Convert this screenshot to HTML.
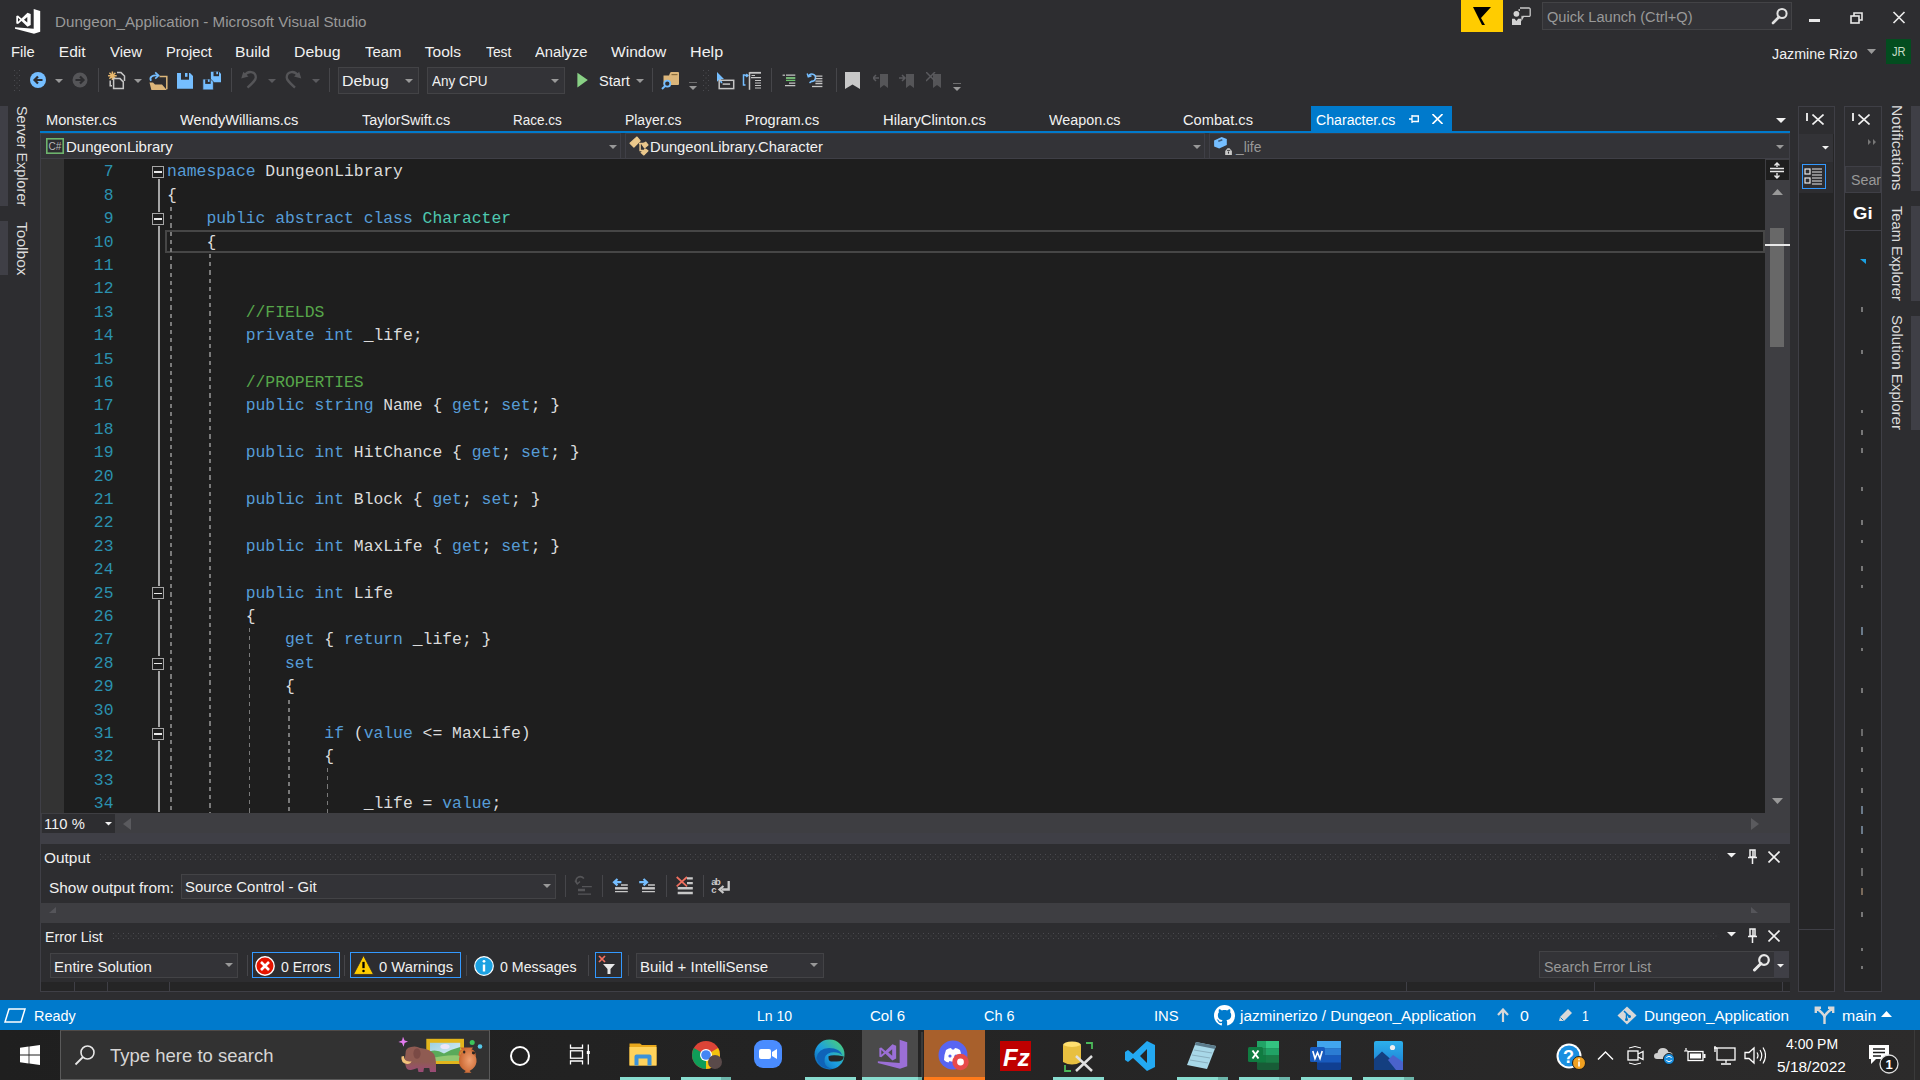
<!DOCTYPE html>
<html><head><meta charset="utf-8">
<style>
*{margin:0;padding:0;box-sizing:border-box}
html,body{width:1920px;height:1080px;overflow:hidden;background:#2d2d30;font-family:"Liberation Sans",sans-serif;color:#f1f1f1}
.a{position:absolute}
.t{position:absolute;white-space:nowrap;line-height:1}
.code{position:absolute;font-family:"Liberation Mono",monospace;white-space:pre;line-height:1}
</style></head><body>
<div class="a" style="left:0px;top:0px;width:1920px;height:1000px;background:#2d2d30;"></div>
<svg class="a" style="left:10px;top:4px" width="36" height="36" viewBox="0 0 36 36">
<path d="M5 23.3 L23.7 24.8 L23.7 5 L30.2 7 L30.2 27.7 L24 29.7 L5 24.8 Z" fill="#fff"/>
<path d="M6.3 12 L8 11.5 L11.5 14.5 L17.5 8.7 L20.7 10 L20.7 21 L17.5 22.7 L11.5 17 L8 20 L6.3 19.5 Z M8 13.8 L8 17.8 L10.2 15.8 Z M14 15.8 L17.3 13 L17.3 18.6 Z" fill="#fff" fill-rule="evenodd"/>
</svg>
<div class="a" style="left:1461px;top:0px;width:42px;height:32px;background:#ffcc00;"></div>
<svg class="a" style="left:1461px;top:0" width="42" height="32"><path d="M12 7 L30 7 L20 18 L24 25 L21 25 Z" fill="#000"/></svg>
<svg class="a" style="left:1510px;top:5px" width="22" height="22" viewBox="0 0 22 22">
<path d="M10 3 H19 a1.2 1.2 0 0 1 1.2 1.2 V10.2 a1.2 1.2 0 0 1 -1.2 1.2 H13.5 L12 14 V11.4 H11.5" fill="none" stroke="#c8c8c8" stroke-width="1.3"/>
<path d="M9.2 6 V4" stroke="#c8c8c8" stroke-width="1.3"/>
<circle cx="6.4" cy="8.8" r="2.9" fill="#d2d2d2"/>
<path d="M2 13.8 H4.6 L6.4 16 L8.2 13.8 H11 V20 H2 Z" fill="#d2d2d2"/></svg>
<div class="a" style="left:1542px;top:2px;width:250px;height:28px;background:#333337;border:1px solid #434346"></div>
<svg class="a" style="left:1770px;top:7px" width="20" height="18" viewBox="0 0 20 18">
<circle cx="12" cy="6.5" r="4.6" fill="none" stroke="#e0e0e0" stroke-width="2"/>
<path d="M9 10 L3 16" stroke="#e0e0e0" stroke-width="2.6" stroke-linecap="round"/></svg>
<div class="a" style="left:1809px;top:19px;width:11px;height:3px;background:#e8e8e8;"></div>
<svg class="a" style="left:1849px;top:11px" width="16" height="14" viewBox="0 0 16 14">
<rect x="2" y="5" width="8" height="7" fill="none" stroke="#e8e8e8" stroke-width="1.6"/>
<path d="M5 5 V2 H13 V9 H10" fill="none" stroke="#e8e8e8" stroke-width="1.6"/></svg>
<svg class="a" style="left:1892px;top:11px" width="14" height="13" viewBox="0 0 14 13">
<path d="M1.5 1 L12.5 12 M12.5 1 L1.5 12" stroke="#e8e8e8" stroke-width="1.7"/></svg>
<svg class="a" style="left:1867px;top:49px" width="9" height="5"><path d="M0 0 H9 L4.5 5 Z" fill="#999"/></svg>
<div class="a" style="left:1886px;top:39px;width:25px;height:25px;background:#034d1f;"></div>
<svg class="a" style="left:14px;top:70px" width="6" height="22"><defs><pattern id="dp1" width="5" height="5" patternUnits="userSpaceOnUse"><rect x="0" y="0" width="1" height="1" fill="#4a4a4f"/><rect x="2.5" y="2.5" width="1" height="1" fill="#4a4a4f"/></pattern></defs><rect width="6" height="22" fill="url(#dp1)"/></svg>
<svg class="a" style="left:29px;top:71px" width="18" height="18" viewBox="0 0 18 18"><circle cx="9" cy="9" r="8" fill="#75beff"/>
<path d="M13.5 9 H6 M9 5.5 L5.5 9 L9 12.5" stroke="#2d2d30" stroke-width="2.2" fill="none"/></svg>
<svg class="a" style="left:55px;top:79px" width="8" height="5"><path d="M0 0 H8 L4.0 4.0 Z" fill="#999999"/></svg>
<svg class="a" style="left:71px;top:71px" width="18" height="18" viewBox="0 0 18 18"><circle cx="9" cy="9" r="7.5" fill="#555558"/>
<path d="M4.5 9 H12 M9 5.5 L12.5 9 L9 12.5" stroke="#2d2d30" stroke-width="2.2" fill="none"/></svg>
<div class="a" style="left:98px;top:68px;width:1px;height:24px;background:#46464a;"></div>
<svg class="a" style="left:100px;top:64px" width="140" height="32" viewBox="0 0 140 32">
<path d="M12.4 7.4 V16 M8.1 11.7 H16.7 M9.4 8.7 L15.4 14.7 M15.4 8.7 L9.4 14.7" stroke="#e8b86d" stroke-width="1.5"/>
<path d="M17 8.6 H21 L24.5 12 V17" stroke="#c5c5c5" stroke-width="1.5" fill="none"/>
<path d="M10.2 16.5 V21.8 H12" stroke="#c5c5c5" stroke-width="1.5" fill="none"/>
<path d="M13.6 14.6 H20 L23.3 17.9 V24.6 H13.6 Z" fill="#2d2d30" stroke="#c5c5c5" stroke-width="1.5"/>
<path d="M59.5 12.6 H66.8 V25.2" stroke="#dcb67a" stroke-width="1.5" fill="none"/>
<path d="M49.5 18.6 H53 L55 20.6 H62 L66.8 25.9 H51.4 Z" fill="#dcb67a"/>
<path d="M51 16.8 C 49 13, 52.5 10.8, 58 11.6" stroke="#75beff" stroke-width="1.8" fill="none"/>
<path d="M55.2 8.4 L58.6 11.6 L55.2 14.6" stroke="#75beff" stroke-width="1.6" fill="none"/>
<path d="M77 9 H90 L93 12 V24.8 H77 Z" fill="#75beff"/><rect x="81" y="9" width="8" height="6.7" fill="#2d2d30"/><rect x="85" y="9" width="2.5" height="3.8" fill="#75beff"/>
<path d="M110.9 7.7 H119 L121 9.7 V18.2 H110.9 Z" fill="#75beff"/><rect x="113.5" y="7.7" width="5.5" height="4.5" fill="#2d2d30"/><rect x="116.3" y="7.7" width="1.7" height="2.5" fill="#75beff"/>
<path d="M102.8 15 H110.5 L113.4 17.9 V25.9 H102.8 Z" fill="#75beff" stroke="#2d2d30" stroke-width="0.8"/><rect x="105.2" y="15.4" width="5.5" height="4.5" fill="#2d2d30"/><rect x="107.9" y="15.4" width="1.7" height="2.5" fill="#75beff"/>
</svg>
<svg class="a" style="left:134px;top:79px" width="8" height="5"><path d="M0 0 H8 L4.0 4.0 Z" fill="#999999"/></svg>
<div class="a" style="left:231px;top:68px;width:1px;height:24px;background:#46464a;"></div>
<svg class="a" style="left:236px;top:64px" width="70" height="32" viewBox="0 0 70 32">
<path d="M5.2 14.6 L7.3 7.8 L12.5 12.5 Z" fill="#555558"/><path d="M8.8 11.2 C 11.5 6.6, 19.7 6.6, 19.8 13.5 C 19.8 16, 17.5 18.2, 11.5 23.6" stroke="#555558" stroke-width="2.3" fill="none"/>
<path d="M65.3 14.6 L63.2 7.8 L58 12.5 Z" fill="#555558"/><path d="M61.7 11.2 C 59 6.6, 50.8 6.6, 50.7 13.5 C 50.7 16, 53 18.2, 59 23.6" stroke="#555558" stroke-width="2.3" fill="none"/>
</svg>
<svg class="a" style="left:268px;top:79px" width="8" height="5"><path d="M0 0 H8 L4.0 4.0 Z" fill="#5a5a5e"/></svg>
<svg class="a" style="left:312px;top:79px" width="8" height="5"><path d="M0 0 H8 L4.0 4.0 Z" fill="#5a5a5e"/></svg>
<div class="a" style="left:329px;top:68px;width:1px;height:24px;background:#46464a;"></div>
<div class="a" style="left:338px;top:67px;width:81px;height:27px;background:#333337;border:1px solid #434346"></div>
<svg class="a" style="left:405px;top:79px" width="8" height="5"><path d="M0 0 H8 L4.0 4.0 Z" fill="#999999"/></svg>
<div class="a" style="left:427px;top:67px;width:138px;height:27px;background:#333337;border:1px solid #434346"></div>
<svg class="a" style="left:551px;top:79px" width="8" height="5"><path d="M0 0 H8 L4.0 4.0 Z" fill="#999999"/></svg>
<svg class="a" style="left:577px;top:72px" width="12" height="16"><path d="M0.4 0.8 L10.8 8 L0.4 15.4 Z" fill="#89d185"/></svg>
<svg class="a" style="left:636px;top:79px" width="8" height="5"><path d="M0 0 H8 L4.0 4.0 Z" fill="#999999"/></svg>
<div class="a" style="left:652px;top:68px;width:1px;height:24px;background:#46464a;"></div>
<svg class="a" style="left:650px;top:64px" width="180" height="32" viewBox="0 0 180 32">
<path d="M13.5 11.5 V20 Q13.5 21 14.5 21 H28 Q29 21 29 20 V9 Q29 8 28 8 H21.5 Q20.5 8 20 9 L19 11.5 Z" fill="#dcb67a"/><path d="M21.5 10.6 H27.5" stroke="#8a6d3e" stroke-width="1.2"/>
<circle cx="17.3" cy="19.7" r="3" fill="#2d2d30" stroke="#75beff" stroke-width="1.7"/><path d="M15.2 21.9 L12 25" stroke="#75beff" stroke-width="2"/>
<path d="M67 8 V17.8 L69.3 15.8 L71 19.5 L72.5 18.8 L70.8 15.3 L74 15 Z" fill="#75beff"/>
<rect x="69.2" y="16.3" width="14.5" height="8.3" fill="none" stroke="#c5c5c5" stroke-width="1.5"/><path d="M72.6 20.1 H80.1" stroke="#c5c5c5" stroke-width="1.5"/>
<path d="M95.5 11 H93.5 V21 H95.5" stroke="#75beff" stroke-width="1.5" fill="none"/><path d="M94.7 11.5 H97.5 M96.3 10 L98 11.5 L96.3 13" stroke="#75beff" stroke-width="1.3" fill="none"/>
<path d="M99.5 8.2 V25.8" stroke="#c5c5c5" stroke-width="1.5"/><path d="M99.5 8.8 H111" stroke="#c5c5c5" stroke-width="1.8"/>
<path d="M101.5 11.5 H105 M101 13.6 H111 M105 16.5 H111 M105 19 H111 M105 21.5 H111 M105 24 H111" stroke="#c5c5c5" stroke-width="1.2"/>
<path d="M132.6 11.2 H135" stroke="#c5c5c5" stroke-width="1.2"/><path d="M136 11.2 H145.3 M139 19.2 H145.3 M135 21.6 H145.3" stroke="#c5c5c5" stroke-width="1.3"/>
<path d="M136 14 H145.3" stroke="#8ae28a" stroke-width="1.5"/><path d="M136 16.4 H145.3" stroke="#6cc36c" stroke-width="1.3"/>
<path d="M158.5 12.5 a3.6 3.6 0 1 1 3 4.8 L159.5 18.8" stroke="#75beff" stroke-width="1.6" fill="none"/><path d="M157.2 9.5 L158.3 12.8 L161.5 11.8" stroke="#75beff" stroke-width="1.5" fill="none"/>
<path d="M165.4 12.2 H172.4 M165.4 14.7 H172.4 M165.4 17.2 H172.4 M165.4 19.5 H172.4" stroke="#c5c5c5" stroke-width="1.3"/><path d="M162 22.5 H172.4" stroke="#c5c5c5" stroke-width="1.3"/>
</svg>
<svg class="a" style="left:689px;top:82px" width="9" height="9"><path d="M0 0 H8" stroke="#999" stroke-width="1.2"/><path d="M0 4 H8 L4 8 Z" fill="#999"/></svg>
<svg class="a" style="left:703px;top:70px" width="6" height="22"><defs><pattern id="dp2" width="5" height="5" patternUnits="userSpaceOnUse"><rect x="0" y="0" width="1" height="1" fill="#4a4a4f"/><rect x="2.5" y="2.5" width="1" height="1" fill="#4a4a4f"/></pattern></defs><rect width="6" height="22" fill="url(#dp2)"/></svg>
<div class="a" style="left:771px;top:68px;width:1px;height:24px;background:#46464a;"></div>
<div class="a" style="left:835.7px;top:68px;width:1px;height:24px;background:#46464a;"></div>
<svg class="a" style="left:845px;top:72px" width="15" height="17"><path d="M0 0 H15 V17 L7.5 12.5 L0 17 Z" fill="#c8c8c8"/></svg>
<svg class="a" style="left:873px;top:72px" width="16" height="16" viewBox="0 0 16 16"><path d="M7 2 H15 V16 L11 13 L7 16 Z" fill="#555558"/><path d="M6 6 H0 M3 3 L0 6 L3 9" stroke="#5a5a5e" stroke-width="1.5" fill="none"/></svg>
<svg class="a" style="left:899px;top:72px" width="16" height="16" viewBox="0 0 16 16"><path d="M7 2 H15 V16 L11 13 L7 16 Z" fill="#555558"/><path d="M0 6 H6 M3 3 L6 6 L3 9" stroke="#5a5a5e" stroke-width="1.5" fill="none"/></svg>
<svg class="a" style="left:926px;top:72px" width="16" height="16" viewBox="0 0 16 16"><path d="M7 2 H15 V16 L11 13 L7 16 Z" fill="#555558"/><path d="M0 0 L9 9 M9 0 L0 9" stroke="#5a5a5e" stroke-width="1.5"/></svg>
<svg class="a" style="left:953px;top:83px" width="9" height="9"><path d="M0 0 H8" stroke="#999" stroke-width="1.2"/><path d="M0 4 H8 L4 8 Z" fill="#999"/></svg>
<div class="a" style="left:0px;top:106px;width:8px;height:100px;background:#3f3f46;"></div>
<div class="a" style="left:0px;top:221px;width:8px;height:54px;background:#3f3f46;"></div>
<div class="a" style="left:1311px;top:106px;width:141px;height:27px;background:#007acc;"></div>
<div class="a" style="left:40px;top:131px;width:1750px;height:2px;background:#007acc;"></div>
<svg class="a" style="left:1409px;top:114px" width="11" height="10" viewBox="0 0 11 10"><path d="M0 5 H3 M3 1 V9 M3 2 H10 M3 7.5 H10 M9.3 2 V7.5" stroke="#fff" stroke-width="1.3" fill="none"/></svg>
<svg class="a" style="left:1432px;top:114px" width="11" height="10" viewBox="0 0 11 10"><path d="M0.5 0 L10.5 10 M10.5 0 L0.5 10" stroke="#fff" stroke-width="1.6"/></svg>
<svg class="a" style="left:1776px;top:118px" width="10" height="6"><path d="M0 0 H10 L5.0 5.0 Z" fill="#f1f1f1"/></svg>
<div class="a" style="left:40px;top:133px;width:1750px;height:26px;background:#333337;border-bottom:1px solid #3f3f46"></div>
<div class="a" style="left:40px;top:133px;width:581px;height:26px;background:#333337;border:1px solid #3f3f46"></div>
<div class="a" style="left:625px;top:133px;width:580px;height:26px;background:#333337;border:1px solid #3f3f46"></div>
<div class="a" style="left:1209px;top:133px;width:581px;height:26px;background:#333337;border:1px solid #3f3f46"></div>
<svg class="a" style="left:46px;top:138px" width="18" height="16" viewBox="0 0 18 16"><rect x="0.8" y="0.8" width="16.4" height="14.4" fill="#2d2d30" stroke="#6db36d" stroke-width="1.6"/>
<text x="2.5" y="12" font-family="Liberation Sans" font-size="10" fill="#b8b8b8">C#</text></svg>
<svg class="a" style="left:609px;top:145px" width="8" height="5"><path d="M0 0 H8 L4.0 4.0 Z" fill="#999999"/></svg>
<svg class="a" style="left:625px;top:134px" width="30" height="24" viewBox="0 0 30 24">
<path d="M12 3.1 L15.1 6.9 L8.9 13.1 L5.1 9.3 Z M20.7 8.2 L22.9 10.9 L19.6 13.8 L17.1 10.4 Z M20.4 15.1 L22.9 16.9 L18.9 20.9 L16.2 18.4 Z" fill="#ebc88c" stroke="#ebc88c" stroke-width="1.3" stroke-linejoin="round"/>
<path d="M14 9.6 H19 M15.1 9.6 V16.6 H18" stroke="#ebc88c" stroke-width="1.5" fill="none"/></svg>
<svg class="a" style="left:1193px;top:145px" width="8" height="5"><path d="M0 0 H8 L4.0 4.0 Z" fill="#999999"/></svg>
<svg class="a" style="left:1209px;top:134px" width="30" height="24" viewBox="0 0 30 24">
<path d="M12.7 3.1 L17.8 5.1 L17.8 11.1 L10.2 14.4 L5.1 12.4 L5.1 6.4 Z" fill="#75beff"/><path d="M9.3 7.2 L13.3 5.7" stroke="#3a5a7a" stroke-width="1.5"/>
<path d="M16.2 17 L18.5 14.2 H20.5 L22.9 17 V20.9 H16.2 Z" fill="#c8c8c8"/><path d="M18 16.4 H21.2" stroke="#333337" stroke-width="0.9"/><path d="M19.5 17.6 V19.6" stroke="#333337" stroke-width="1.1"/></svg>
<svg class="a" style="left:1776px;top:145px" width="8" height="5"><path d="M0 0 H8 L4.0 4.0 Z" fill="#999999"/></svg>
<div class="a" style="left:40px;top:159px;width:1725px;height:654px;background:#1e1e1e;"></div>
<div class="a" style="left:40px;top:159px;width:24px;height:654px;background:#333333;"></div>
<div class="a" style="left:165px;top:230px;width:1600px;height:23px;background:transparent;border:2.5px solid #464646"></div>
<div class="code" style="left:103.66px;top:164.35px;font-size:16.39px;color:#2b91af">7</div>
<div class="code" style="left:167.10px;top:164.35px;font-size:16.39px"><span style="color:#569cd6">namespace</span><span style="color:#dcdcdc"> DungeonLibrary</span></div>
<div class="code" style="left:103.66px;top:187.75px;font-size:16.39px;color:#2b91af">8</div>
<div class="code" style="left:167.10px;top:187.75px;font-size:16.39px"><span style="color:#dcdcdc">{</span></div>
<div class="code" style="left:103.66px;top:211.15px;font-size:16.39px;color:#2b91af">9</div>
<div class="code" style="left:167.10px;top:211.15px;font-size:16.39px"><span style="color:#569cd6">    public abstract class</span><span style="color:#dcdcdc"> </span><span style="color:#4ec9b0">Character</span></div>
<div class="code" style="left:93.83px;top:234.55px;font-size:16.39px;color:#2b91af">10</div>
<div class="code" style="left:167.10px;top:234.55px;font-size:16.39px"><span style="color:#dcdcdc">    {</span></div>
<div class="code" style="left:93.83px;top:257.95px;font-size:16.39px;color:#2b91af">11</div>
<div class="code" style="left:93.83px;top:281.35px;font-size:16.39px;color:#2b91af">12</div>
<div class="code" style="left:93.83px;top:304.75px;font-size:16.39px;color:#2b91af">13</div>
<div class="code" style="left:167.10px;top:304.75px;font-size:16.39px"><span style="color:#57a64a">        //FIELDS</span></div>
<div class="code" style="left:93.83px;top:328.15px;font-size:16.39px;color:#2b91af">14</div>
<div class="code" style="left:167.10px;top:328.15px;font-size:16.39px"><span style="color:#569cd6">        private int</span><span style="color:#dcdcdc"> _life;</span></div>
<div class="code" style="left:93.83px;top:351.55px;font-size:16.39px;color:#2b91af">15</div>
<div class="code" style="left:93.83px;top:374.95px;font-size:16.39px;color:#2b91af">16</div>
<div class="code" style="left:167.10px;top:374.95px;font-size:16.39px"><span style="color:#57a64a">        //PROPERTIES</span></div>
<div class="code" style="left:93.83px;top:398.35px;font-size:16.39px;color:#2b91af">17</div>
<div class="code" style="left:167.10px;top:398.35px;font-size:16.39px"><span style="color:#569cd6">        public string</span><span style="color:#dcdcdc"> Name { </span><span style="color:#569cd6">get</span><span style="color:#dcdcdc">; </span><span style="color:#569cd6">set</span><span style="color:#dcdcdc">; }</span></div>
<div class="code" style="left:93.83px;top:421.75px;font-size:16.39px;color:#2b91af">18</div>
<div class="code" style="left:93.83px;top:445.15px;font-size:16.39px;color:#2b91af">19</div>
<div class="code" style="left:167.10px;top:445.15px;font-size:16.39px"><span style="color:#569cd6">        public int</span><span style="color:#dcdcdc"> HitChance { </span><span style="color:#569cd6">get</span><span style="color:#dcdcdc">; </span><span style="color:#569cd6">set</span><span style="color:#dcdcdc">; }</span></div>
<div class="code" style="left:93.83px;top:468.55px;font-size:16.39px;color:#2b91af">20</div>
<div class="code" style="left:93.83px;top:491.95px;font-size:16.39px;color:#2b91af">21</div>
<div class="code" style="left:167.10px;top:491.95px;font-size:16.39px"><span style="color:#569cd6">        public int</span><span style="color:#dcdcdc"> Block { </span><span style="color:#569cd6">get</span><span style="color:#dcdcdc">; </span><span style="color:#569cd6">set</span><span style="color:#dcdcdc">; }</span></div>
<div class="code" style="left:93.83px;top:515.35px;font-size:16.39px;color:#2b91af">22</div>
<div class="code" style="left:93.83px;top:538.75px;font-size:16.39px;color:#2b91af">23</div>
<div class="code" style="left:167.10px;top:538.75px;font-size:16.39px"><span style="color:#569cd6">        public int</span><span style="color:#dcdcdc"> MaxLife { </span><span style="color:#569cd6">get</span><span style="color:#dcdcdc">; </span><span style="color:#569cd6">set</span><span style="color:#dcdcdc">; }</span></div>
<div class="code" style="left:93.83px;top:562.15px;font-size:16.39px;color:#2b91af">24</div>
<div class="code" style="left:93.83px;top:585.55px;font-size:16.39px;color:#2b91af">25</div>
<div class="code" style="left:167.10px;top:585.55px;font-size:16.39px"><span style="color:#569cd6">        public int</span><span style="color:#dcdcdc"> Life</span></div>
<div class="code" style="left:93.83px;top:608.95px;font-size:16.39px;color:#2b91af">26</div>
<div class="code" style="left:167.10px;top:608.95px;font-size:16.39px"><span style="color:#dcdcdc">        {</span></div>
<div class="code" style="left:93.83px;top:632.35px;font-size:16.39px;color:#2b91af">27</div>
<div class="code" style="left:167.10px;top:632.35px;font-size:16.39px"><span style="color:#569cd6">            get</span><span style="color:#dcdcdc"> { </span><span style="color:#569cd6">return</span><span style="color:#dcdcdc"> _life; }</span></div>
<div class="code" style="left:93.83px;top:655.75px;font-size:16.39px;color:#2b91af">28</div>
<div class="code" style="left:167.10px;top:655.75px;font-size:16.39px"><span style="color:#569cd6">            set</span></div>
<div class="code" style="left:93.83px;top:679.15px;font-size:16.39px;color:#2b91af">29</div>
<div class="code" style="left:167.10px;top:679.15px;font-size:16.39px"><span style="color:#dcdcdc">            {</span></div>
<div class="code" style="left:93.83px;top:702.55px;font-size:16.39px;color:#2b91af">30</div>
<div class="code" style="left:93.83px;top:725.95px;font-size:16.39px;color:#2b91af">31</div>
<div class="code" style="left:167.10px;top:725.95px;font-size:16.39px"><span style="color:#569cd6">                if</span><span style="color:#dcdcdc"> (</span><span style="color:#569cd6">value</span><span style="color:#dcdcdc"> &lt;= MaxLife)</span></div>
<div class="code" style="left:93.83px;top:749.35px;font-size:16.39px;color:#2b91af">32</div>
<div class="code" style="left:167.10px;top:749.35px;font-size:16.39px"><span style="color:#dcdcdc">                {</span></div>
<div class="code" style="left:93.83px;top:772.75px;font-size:16.39px;color:#2b91af">33</div>
<div class="code" style="left:93.83px;top:796.15px;font-size:16.39px;color:#2b91af">34</div>
<div class="code" style="left:167.10px;top:796.15px;font-size:16.39px"><span style="color:#dcdcdc">                    _life = </span><span style="color:#569cd6">value</span><span style="color:#dcdcdc">;</span></div>
<div class="a" style="left:152px;top:166.1px;width:12.2px;height:12.2px;border:1.4px solid #a5a5a5;background:#1e1e1e"></div>
<div class="a" style="left:154.2px;top:171.4px;width:7.8px;height:1.6px;background:#e8e8e8"></div>
<div class="a" style="left:152px;top:212.9px;width:12.2px;height:12.2px;border:1.4px solid #a5a5a5;background:#1e1e1e"></div>
<div class="a" style="left:154.2px;top:218.2px;width:7.8px;height:1.6px;background:#e8e8e8"></div>
<div class="a" style="left:152px;top:587.3px;width:12.2px;height:12.2px;border:1.4px solid #a5a5a5;background:#1e1e1e"></div>
<div class="a" style="left:154.2px;top:592.6px;width:7.8px;height:1.6px;background:#e8e8e8"></div>
<div class="a" style="left:152px;top:657.5px;width:12.2px;height:12.2px;border:1.4px solid #a5a5a5;background:#1e1e1e"></div>
<div class="a" style="left:154.2px;top:662.8px;width:7.8px;height:1.6px;background:#e8e8e8"></div>
<div class="a" style="left:152px;top:727.7px;width:12.2px;height:12.2px;border:1.4px solid #a5a5a5;background:#1e1e1e"></div>
<div class="a" style="left:154.2px;top:733.0px;width:7.8px;height:1.6px;background:#e8e8e8"></div>
<div class="a" style="left:157.9px;top:179.1px;width:2.1px;height:32.8px;background:#a5a5a5"></div>
<div class="a" style="left:157.9px;top:225.9px;width:2.1px;height:360.4px;background:#a5a5a5"></div>
<div class="a" style="left:157.9px;top:600.3px;width:2.1px;height:56.2px;background:#a5a5a5"></div>
<div class="a" style="left:157.9px;top:670.5px;width:2.1px;height:56.2px;background:#a5a5a5"></div>
<div class="a" style="left:157.9px;top:740.7px;width:2.1px;height:71.3px;background:#a5a5a5"></div>
<div class="a" style="left:170.4px;top:207.0px;width:1.7px;height:606.0px;background:repeating-linear-gradient(to bottom,#7a7a7a 0,#7a7a7a 4.2px,transparent 4.2px,transparent 8.2px)"></div>
<div class="a" style="left:209.4px;top:254.0px;width:1.7px;height:559.0px;background:repeating-linear-gradient(to bottom,#7a7a7a 0,#7a7a7a 4.2px,transparent 4.2px,transparent 8.2px)"></div>
<div class="a" style="left:248.6px;top:628.0px;width:1.7px;height:185.0px;background:repeating-linear-gradient(to bottom,#7a7a7a 0,#7a7a7a 4.2px,transparent 4.2px,transparent 8.2px)"></div>
<div class="a" style="left:288.2px;top:700.0px;width:1.7px;height:113.0px;background:repeating-linear-gradient(to bottom,#7a7a7a 0,#7a7a7a 4.2px,transparent 4.2px,transparent 8.2px)"></div>
<div class="a" style="left:326.7px;top:768.0px;width:1.7px;height:45.0px;background:repeating-linear-gradient(to bottom,#7a7a7a 0,#7a7a7a 4.2px,transparent 4.2px,transparent 8.2px)"></div>
<div class="a" style="left:1765px;top:159px;width:25px;height:654px;background:#3e3e42;"></div>
<div class="a" style="left:1766px;top:160px;width:23px;height:20px;background:#1e1e1e;"></div>
<svg class="a" style="left:1769px;top:162px" width="16" height="17" viewBox="0 0 16 17"><path d="M1 6.5 H15 M1 9.5 H15" stroke="#e8e8e8" stroke-width="1.6"/><path d="M8 1 V5 M8 11 V16 M5.5 3.5 L8 1 L10.5 3.5 M5.5 13.5 L8 16 L10.5 13.5" stroke="#e8e8e8" stroke-width="1.4" fill="none"/></svg>
<svg class="a" style="left:1772px;top:189px" width="11" height="6"><path d="M0 6 L5.5 0 L11 6 Z" fill="#999999"/></svg>
<div class="a" style="left:1770px;top:228px;width:14px;height:119px;background:#686868;"></div>
<div class="a" style="left:1765px;top:244px;width:25px;height:2px;background:#e8e8e8;"></div>
<svg class="a" style="left:1772px;top:798px" width="11" height="6"><path d="M0 0 L5.5 6 L11 0 Z" fill="#999999"/></svg>
<div class="a" style="left:40px;top:813px;width:1750px;height:20px;background:#3e3e42;"></div>
<div class="a" style="left:42px;top:814px;width:73px;height:19px;background:#2d2d30;"></div>
<svg class="a" style="left:105px;top:822px" width="7" height="4"><path d="M0 0 H7 L3.5 3.5 Z" fill="#f1f1f1"/></svg>
<svg class="a" style="left:123px;top:818px" width="8" height="12"><path d="M8 0 L0 6 L8 12 Z" fill="#5a5a5e"/></svg>
<svg class="a" style="left:1751px;top:818px" width="8" height="12"><path d="M0 0 L8 6 L0 12 Z" fill="#5a5a5e"/></svg>
<div class="a" style="left:40px;top:833px;width:1750px;height:11px;background:#3f3f46;"></div>
<div class="a" style="left:40px;top:159px;width:1px;height:685px;background:#3f3f46;"></div>
<div class="a" style="left:40px;top:844px;width:1750px;height:59px;background:#2d2d30;border-left:1px solid #3f3f46"></div>
<svg class="a" style="left:100px;top:854px" width="1618" height="7"><defs><pattern id="dp3" width="5" height="5" patternUnits="userSpaceOnUse"><rect x="0" y="0" width="1" height="1" fill="#4a4a4f"/><rect x="2.5" y="2.5" width="1" height="1" fill="#4a4a4f"/></pattern></defs><rect width="1618" height="7" fill="url(#dp3)"/></svg>
<svg class="a" style="left:1727px;top:853px" width="9" height="5"><path d="M0 0 H9 L4.5 4.5 Z" fill="#f1f1f1"/></svg>
<svg class="a" style="left:1747px;top:849px" width="11" height="15" viewBox="0 0 11 15"><path d="M3 1 H8 V8 H3 Z M1 8.5 H10 M5.5 8.5 V15" stroke="#f1f1f1" stroke-width="1.5" fill="none"/><path d="M6 1 V8" stroke="#f1f1f1" stroke-width="1.5"/></svg>
<svg class="a" style="left:1768px;top:851px" width="12" height="12"><path d="M0.5 0.5 L11.5 11.5 M11.5 0.5 L0.5 11.5" stroke="#f1f1f1" stroke-width="1.6"/></svg>
<div class="a" style="left:181px;top:874px;width:375px;height:25px;background:#333337;border:1px solid #434346"></div>
<svg class="a" style="left:543px;top:884px" width="8" height="5"><path d="M0 0 H8 L4.0 4.0 Z" fill="#999999"/></svg>
<div class="a" style="left:565px;top:875px;width:1px;height:22px;background:#46464a;"></div>
<div class="a" style="left:602px;top:875px;width:1px;height:22px;background:#46464a;"></div>
<div class="a" style="left:666px;top:875px;width:1px;height:22px;background:#46464a;"></div>
<div class="a" style="left:703px;top:875px;width:1px;height:22px;background:#46464a;"></div>
<svg class="a" style="left:560px;top:870px" width="180" height="32" viewBox="0 0 180 32">
<path d="M17 13.5 C 14 8, 20 4.5, 24 8.5" stroke="#555558" stroke-width="1.5" fill="none"/><path d="M15 10.5 L17.3 14 L20 11.5" stroke="#555558" stroke-width="1.4" fill="none"/>
<path d="M22 16.7 H31.8 M18 24.2 H31" stroke="#555558" stroke-width="1.3"/><path d="M18 20 H25" stroke="#555558" stroke-width="2.5"/>
<path d="M61.4 12.2 H54.5 M57.5 9 L54 12.2 L57.5 15.4" stroke="#75beff" stroke-width="2.2" fill="none"/>
<path d="M61 15 H67.8 M55 21.6 H67.8" stroke="#c8c8c8" stroke-width="1.4"/><path d="M55 18.3 H67.8" stroke="#c8c8c8" stroke-width="2.4"/>
<path d="M79.2 12.2 H86.5 M83.5 9 L87 12.2 L83.5 15.4" stroke="#75beff" stroke-width="2.2" fill="none"/>
<path d="M88 15 H94.9 M82 21.6 H94.9" stroke="#c8c8c8" stroke-width="1.4"/><path d="M82 18.3 H94.9" stroke="#c8c8c8" stroke-width="2.4"/>
<path d="M116.7 7 L127 16.4 M127 7 L116.7 16.4" stroke="#f1705f" stroke-width="1.7"/>
<path d="M127 8.4 H132.8 M127 13.1 H132.8 M117.7 18.3 H132.8 M117.7 23 H132.8" stroke="#c8c8c8" stroke-width="2.4"/>
<text x="151.3" y="15" font-family="Liberation Sans" font-weight="bold" font-size="9.5" fill="#c8c8c8" textLength="9.5">ab</text>
<text x="151.3" y="22.7" font-family="Liberation Sans" font-weight="bold" font-size="9.5" fill="#c8c8c8">c</text>
<path d="M168.7 11 V19.5 H161.5" stroke="#c8c8c8" stroke-width="2.3" fill="none"/><path d="M163.5 16 L159.5 19.5 L163.5 23" stroke="#c8c8c8" stroke-width="2.2" fill="none"/>
</svg>
<div class="a" style="left:40px;top:903px;width:1750px;height:20px;background:#3e3e42;"></div>
<svg class="a" style="left:49px;top:907px" width="7" height="6"><path d="M7 0 V6 H0 Z" fill="#55555a"/></svg>
<svg class="a" style="left:1751px;top:907px" width="7" height="6"><path d="M0 0 L7 6 H0 Z" fill="#55555a"/></svg>
<div class="a" style="left:40px;top:923px;width:1750px;height:69px;background:#2d2d30;border-left:1px solid #3f3f46"></div>
<svg class="a" style="left:113px;top:933px" width="1605" height="7"><defs><pattern id="dp4" width="5" height="5" patternUnits="userSpaceOnUse"><rect x="0" y="0" width="1" height="1" fill="#4a4a4f"/><rect x="2.5" y="2.5" width="1" height="1" fill="#4a4a4f"/></pattern></defs><rect width="1605" height="7" fill="url(#dp4)"/></svg>
<svg class="a" style="left:1727px;top:932px" width="9" height="5"><path d="M0 0 H9 L4.5 4.5 Z" fill="#f1f1f1"/></svg>
<svg class="a" style="left:1747px;top:928px" width="11" height="15" viewBox="0 0 11 15"><path d="M3 1 H8 V8 H3 Z M1 8.5 H10 M5.5 8.5 V15" stroke="#f1f1f1" stroke-width="1.5" fill="none"/><path d="M6 1 V8" stroke="#f1f1f1" stroke-width="1.5"/></svg>
<svg class="a" style="left:1768px;top:930px" width="12" height="12"><path d="M0.5 0.5 L11.5 11.5 M11.5 0.5 L0.5 11.5" stroke="#f1f1f1" stroke-width="1.6"/></svg>
<div class="a" style="left:50px;top:953px;width:188px;height:25px;background:#333337;border:1px solid #434346"></div>
<svg class="a" style="left:225px;top:963px" width="8" height="5"><path d="M0 0 H8 L4.0 4.0 Z" fill="#999999"/></svg>
<div class="a" style="left:247px;top:955px;width:1px;height:21px;background:#46464a;"></div>
<div class="a" style="left:252px;top:952px;width:88px;height:26px;background:#2d2d30;border:1px solid #3399ff"></div>
<svg class="a" style="left:255px;top:956px" width="20" height="20" viewBox="0 0 20 20"><circle cx="10" cy="10" r="9.2" fill="#e51400" stroke="#fff" stroke-width="1.4"/><path d="M6 6 L14 14 M14 6 L6 14" stroke="#fff" stroke-width="2.6"/></svg>
<div class="a" style="left:344px;top:955px;width:1px;height:21px;background:#46464a;"></div>
<div class="a" style="left:350px;top:952px;width:111px;height:26px;background:#2d2d30;border:1px solid #3399ff"></div>
<svg class="a" style="left:353px;top:955px" width="21" height="20" viewBox="0 0 20 19"><path d="M10 0.5 L19.5 18.5 H0.5 Z" fill="#ffcc00" stroke="#2d2d30" stroke-width="0.8"/><path d="M10 6.5 V12.5" stroke="#000" stroke-width="2.2"/><circle cx="10" cy="15.2" r="1.2" fill="#000"/></svg>
<div class="a" style="left:466px;top:955px;width:1px;height:21px;background:#46464a;"></div>
<svg class="a" style="left:474px;top:956px" width="20" height="20" viewBox="0 0 20 20"><circle cx="10" cy="10" r="9.3" fill="#1ba1e2" stroke="#fff" stroke-width="1.2"/><path d="M10 8.5 V15.5" stroke="#fff" stroke-width="2.4"/><circle cx="10" cy="5.3" r="1.4" fill="#fff"/></svg>
<div class="a" style="left:588px;top:955px;width:1px;height:21px;background:#46464a;"></div>
<div class="a" style="left:595px;top:952px;width:27px;height:26px;background:#2d2d30;border:1px solid #3399ff"></div>
<svg class="a" style="left:598px;top:955px" width="20" height="20" viewBox="0 0 20 20"><path d="M1 1 L7 7 M7 1 L1 7" stroke="#f1705f" stroke-width="1.7"/><path d="M5 9 H17 L12.5 14 V19 H9.5 V14 Z" fill="#e8e8e8"/></svg>
<div class="a" style="left:627.5px;top:955px;width:1px;height:21px;background:#46464a;"></div>
<div class="a" style="left:636px;top:953px;width:188px;height:25px;background:#333337;border:1px solid #434346"></div>
<svg class="a" style="left:810px;top:963px" width="8" height="5"><path d="M0 0 H8 L4.0 4.0 Z" fill="#999999"/></svg>
<div class="a" style="left:1539px;top:951px;width:236px;height:27px;background:#333337;border:1px solid #434346"></div>
<svg class="a" style="left:1752px;top:953px" width="19" height="19" viewBox="0 0 19 19"><circle cx="12" cy="7" r="4.8" fill="none" stroke="#e8e8e8" stroke-width="2.2"/><path d="M9 10.5 L2.5 17" stroke="#e8e8e8" stroke-width="3" stroke-linecap="round"/></svg>
<div class="a" style="left:1774px;top:951px;width:15px;height:27px;background:#3f3f46;"></div>
<svg class="a" style="left:1777px;top:964px" width="7" height="4"><path d="M0 0 H7 L3.5 3.5 Z" fill="#f1f1f1"/></svg>
<div class="a" style="left:41px;top:982px;width:1749px;height:10px;background:#252526;"></div>
<div class="a" style="left:74px;top:982px;width:1px;height:10px;background:#3f3f46;"></div>
<div class="a" style="left:107px;top:982px;width:1px;height:10px;background:#3f3f46;"></div>
<div class="a" style="left:169px;top:982px;width:1px;height:10px;background:#3f3f46;"></div>
<div class="a" style="left:1406px;top:982px;width:1px;height:10px;background:#3f3f46;"></div>
<div class="a" style="left:1594px;top:982px;width:1px;height:10px;background:#3f3f46;"></div>
<div class="a" style="left:1782px;top:982px;width:1px;height:10px;background:#3f3f46;"></div>
<div class="a" style="left:40px;top:991px;width:1750px;height:1px;background:#3f3f46;"></div>
<div class="a" style="left:1798px;top:106px;width:37px;height:886px;background:#252526;border:1px solid #3f3f46"></div>
<div class="a" style="left:1799px;top:107px;width:35px;height:27px;background:#2d2d30;"></div>
<div class="a" style="left:1806px;top:113px;width:1.5px;height:8px;background:#e0e0e0"></div>
<svg class="a" style="left:1812px;top:114px" width="12" height="11"><path d="M0.5 0.5 L11.5 10.5 M11.5 0.5 L0.5 10.5" stroke="#f1f1f1" stroke-width="1.6"/></svg>
<div class="a" style="left:1799px;top:134px;width:34px;height:28px;background:#333337;"></div>
<svg class="a" style="left:1822px;top:146px" width="7" height="4"><path d="M0 0 H7 L3.5 3.5 Z" fill="#f1f1f1"/></svg>
<div class="a" style="left:1799px;top:162px;width:34px;height:31px;background:#2d2d30;"></div>
<div class="a" style="left:1802px;top:164px;width:24px;height:25px;background:#2d2d30;border:1px solid #3399ff"></div>
<svg class="a" style="left:1804px;top:167px" width="20" height="19" viewBox="0 0 20 19"><rect x="1" y="2" width="5" height="5" fill="none" stroke="#e8e8e8" stroke-width="1.2"/><rect x="1" y="11" width="5" height="5" fill="none" stroke="#e8e8e8" stroke-width="1.2"/><path d="M8 2 H18 M8 5 H18 M8 8 H18 M8 11 H18 M8 14 H18 M8 17 H18" stroke="#e8e8e8" stroke-width="1.2"/></svg>
<div class="a" style="left:1799px;top:929px;width:35px;height:1px;background:#3f3f46;"></div>
<div class="a" style="left:1844px;top:106px;width:38px;height:886px;background:#252526;border:1px solid #3f3f46"></div>
<div class="a" style="left:1845px;top:107px;width:36px;height:59px;background:#2d2d30;"></div>
<div class="a" style="left:1852px;top:113px;width:1.5px;height:8px;background:#e0e0e0"></div>
<svg class="a" style="left:1858px;top:114px" width="12" height="11"><path d="M0.5 0.5 L11.5 10.5 M11.5 0.5 L0.5 10.5" stroke="#f1f1f1" stroke-width="1.6"/></svg>
<svg class="a" style="left:1868px;top:139px" width="9" height="6"><path d="M0 0 L3 3 L0 6 Z M5 0 L8 3 L5 6 Z" fill="#777"/></svg>
<div class="a" style="left:1845px;top:166px;width:36px;height:27px;background:#333337;border:1px solid #3f3f46"></div>
<div class="a" style="left:1846px;top:167px;width:35px;height:25px;overflow:hidden"><span class="t" style="left:5px;top:5px;font-size:15.5px;color:#999;transform-origin:0 0;transform:scaleX(0.92)">Search</span></div>
<div class="a" style="left:1881px;top:166px;width:1px;height:27px;background:#3f3f46;"></div>
<div class="a" style="left:1845px;top:193px;width:36px;height:38px;background:#252526;border-bottom:1px solid #3f3f46"></div>
<svg class="a" style="left:1860px;top:259px" width="6" height="5"><path d="M0 0 H6 V5 Z" fill="#1ba1e2"/></svg>
<div class="a" style="left:1861px;top:307px;width:1.5px;height:5px;background:#777;"></div>
<div class="a" style="left:1861px;top:350px;width:1.5px;height:4px;background:#777;"></div>
<div class="a" style="left:1861px;top:410px;width:1.5px;height:3px;background:#777;"></div>
<div class="a" style="left:1861px;top:430px;width:1.5px;height:5px;background:#777;"></div>
<div class="a" style="left:1861px;top:448px;width:1.5px;height:5px;background:#777;"></div>
<div class="a" style="left:1861px;top:487px;width:1.5px;height:4px;background:#777;"></div>
<div class="a" style="left:1861px;top:520px;width:1.5px;height:5px;background:#777;"></div>
<div class="a" style="left:1861px;top:540px;width:1.5px;height:3px;background:#777;"></div>
<div class="a" style="left:1861px;top:566px;width:1.5px;height:5px;background:#777;"></div>
<div class="a" style="left:1861px;top:585px;width:1.5px;height:3px;background:#777;"></div>
<div class="a" style="left:1861px;top:627px;width:1.5px;height:8px;background:#6a7a8a;"></div>
<div class="a" style="left:1861px;top:648px;width:1.5px;height:3px;background:#777;"></div>
<div class="a" style="left:1861px;top:688px;width:1.5px;height:5px;background:#777;"></div>
<div class="a" style="left:1861px;top:729px;width:1.5px;height:7px;background:#6a6a6a;"></div>
<div class="a" style="left:1861px;top:747px;width:1.5px;height:5px;background:#777;"></div>
<div class="a" style="left:1861px;top:768px;width:1.5px;height:4px;background:#777;"></div>
<div class="a" style="left:1861px;top:788px;width:1.5px;height:5px;background:#777;"></div>
<div class="a" style="left:1861px;top:806px;width:1.5px;height:8px;background:#6a7a8a;"></div>
<div class="a" style="left:1861px;top:826px;width:1.5px;height:8px;background:#6a7a8a;"></div>
<div class="a" style="left:1861px;top:848px;width:1.5px;height:5px;background:#777;"></div>
<div class="a" style="left:1861px;top:868px;width:1.5px;height:8px;background:#6a6a6a;"></div>
<div class="a" style="left:1861px;top:888px;width:1.5px;height:7px;background:#7a6a5a;"></div>
<div class="a" style="left:1861px;top:912px;width:1.5px;height:5px;background:#777;"></div>
<div class="a" style="left:1861px;top:948px;width:1.5px;height:3px;background:#777;"></div>
<div class="a" style="left:1861px;top:966px;width:1.5px;height:3px;background:#777;"></div>
<div class="a" style="left:1911px;top:106px;width:9px;height:85px;background:#3f3f46;"></div>
<div class="a" style="left:1911px;top:206px;width:9px;height:95px;background:#3f3f46;"></div>
<div class="a" style="left:1911px;top:316px;width:9px;height:114px;background:#3f3f46;"></div>
<div class="a" style="left:0px;top:1000px;width:1920px;height:30px;background:#007acc;"></div>
<svg class="a" style="left:4px;top:1008px" width="22" height="15"><path d="M5 1 H21 L17 14 H1 Z" fill="none" stroke="#fff" stroke-width="1.5"/></svg>
<svg class="a" style="left:1214px;top:1005px" width="21" height="21" viewBox="0 0 16 16"><path fill="#fff" d="M8 0C3.58 0 0 3.58 0 8c0 3.54 2.29 6.53 5.47 7.59.4.07.55-.17.55-.38 0-.19-.01-.82-.01-1.49-2.01.37-2.53-.49-2.69-.94-.09-.23-.48-.94-.82-1.13-.28-.15-.68-.52-.01-.53.63-.01 1.08.58 1.23.82.72 1.21 1.87.87 2.33.66.07-.52.28-.87.51-1.07-1.78-.2-3.64-.89-3.64-3.95 0-.87.31-1.59.82-2.15-.08-.2-.36-1.02.08-2.12 0 0 .67-.21 2.2.82.64-.18 1.32-.27 2-.27.68 0 1.36.09 2 .27 1.53-1.04 2.2-.82 2.2-.82.44 1.1.16 1.92.08 2.12.51.56.82 1.27.82 2.15 0 3.07-1.87 3.75-3.65 3.95.29.25.54.73.54 1.48 0 1.07-.01 1.93-.01 2.2 0 .21.15.46.55.38A8.013 8.013 0 0016 8c0-4.42-3.58-8-8-8z"/></svg>
<svg class="a" style="left:1497px;top:1008px" width="12" height="15" viewBox="0 0 12 15"><path d="M6 14 V2 M1 7 L6 1.5 L11 7" stroke="#d8d8d8" stroke-width="2.2" fill="none"/></svg>
<svg class="a" style="left:1557px;top:1008px" width="17" height="15" viewBox="0 0 17 15"><path d="M2 13 L3 9 L11 1 L15 5 L7 13 Z" fill="#d8d8d8"/><path d="M3.5 9.5 L6.5 12.5" stroke="#007acc" stroke-width="1"/></svg>
<svg class="a" style="left:1617px;top:1006px" width="20" height="19" viewBox="0 0 20 19"><path d="M10 0.5 L19.5 9.5 L10 18.5 L0.5 9.5 Z" fill="#d8d8d8"/><path d="M7 5 L12.5 10.5 M9.5 7.5 V13.5" stroke="#007acc" stroke-width="1.5"/><circle cx="9.5" cy="13.5" r="1.5" fill="#007acc"/><circle cx="12.5" cy="10.5" r="1.5" fill="#007acc"/></svg>
<svg class="a" style="left:1814px;top:1006px" width="21" height="19" viewBox="0 0 21 19"><path d="M10.5 18 V12 Q10.5 9 7 6 L3 2.5 M10.5 12 Q10.5 9 14 6 L18 2.5 M1.8 7 V1.8 H7 M19.2 7 V1.8 H14" stroke="#d8d8d8" stroke-width="2.4" fill="none"/></svg>
<svg class="a" style="left:1881px;top:1011px" width="11" height="7"><path d="M0 6 L5.5 0 L11 6 Z" fill="#fff"/></svg>
<div class="a" style="left:0px;top:1030px;width:1920px;height:50px;background:linear-gradient(to right,#1f1f1f,#232323 40%,#2c2b2b);"></div>
<svg class="a" style="left:20px;top:1045px" width="20" height="20" viewBox="0 0 20 20"><path d="M0 2.8 L8.6 1.6 V9.6 H0 Z M9.4 1.5 L20 0 V9.6 H9.4 Z M0 10.4 H8.6 V18.4 L0 17.2 Z M9.4 10.4 H20 V20 L9.4 18.5 Z" fill="#fff"/></svg>
<div class="a" style="left:60px;top:1030px;width:430px;height:50px;background:#323232;border:1px solid #5a5a5a;border-top-color:#4f4a47"></div>
<svg class="a" style="left:74px;top:1044px" width="22" height="22" viewBox="0 0 22 22"><circle cx="13.5" cy="8.5" r="6.5" fill="none" stroke="#e8e8e8" stroke-width="1.6"/><path d="M9 13 L1.5 20.5" stroke="#e8e8e8" stroke-width="1.8"/></svg>
<svg class="a" style="left:394px;top:1032px" width="96" height="46" viewBox="0 0 96 46">
<defs><linearGradient id="sky" x1="0" y1="0" x2="1" y2="1"><stop offset="0" stop-color="#9fd0e0"/><stop offset="1" stop-color="#e0f4fa"/></linearGradient>
<linearGradient id="mam" x1="0" y1="0" x2="0" y2="1"><stop offset="0.6" stop-color="#8f5b52"/><stop offset="1" stop-color="#9a4a78"/></linearGradient>
<radialGradient id="vas" cx="0.6" cy="0.5" r="0.6"><stop offset="0" stop-color="#f0a070"/><stop offset="1" stop-color="#c8642e"/></radialGradient></defs>
<path d="M9 4.8 L10.6 8.4 L14 9.6 L10.6 11 L9.6 14.8 L8 11 L4.4 10 L8 8.4 Z" fill="#e47cf0"/>
<rect x="32.3" y="6.8" width="37.7" height="25.2" fill="#e2b51c"/><rect x="36" y="10.8" width="30.2" height="18.2" fill="url(#sky)"/>
<path d="M36 19.5 Q42 17 50 21.5 Q58 17 66.2 15 V29 H36 Z" fill="#5aaa5a"/><path d="M36 27 Q50 22.5 66.2 23.5 V29 H36 Z" fill="#92c872"/>
<ellipse cx="51" cy="14.5" rx="4.6" ry="2.6" fill="#ece6fa"/>
<path d="M11.5 22 Q11 16 17 15 Q22 13.5 26 16 Q36 17 40 22 Q42 26 42 33 L42 40 L36 40 L35.3 36 L30 36 L29.3 40 L24.5 40 L23.5 36 Q19.5 37.5 17 38 Q13 38.5 12 35 Q10 30 11.5 22 Z" fill="url(#mam)"/>
<ellipse cx="23" cy="21.5" rx="3.6" ry="5.2" fill="#7a4a45"/>
<path d="M7.5 24.5 Q6.5 31 13 32 Q16.5 32.3 17.5 29.3 Q13 30 11.2 28 Q10 26.5 10 24 Z" fill="#f2c27a"/>
<path d="M66 15.5 H79 L77 18.5 Q83 23 82.5 30 Q81.5 36 75.5 39 L77.5 40.8 H70 L71.8 39 Q65.5 36 65 30 Q64.5 23 69 18.5 Z" fill="url(#vas)"/>
<path d="M68.5 18 Q65 19 65.5 24 M77 18 Q81 19 81 24" stroke="#cf6c36" stroke-width="1.6" fill="none"/>
<ellipse cx="70.2" cy="20" rx="1.2" ry="1.6" fill="#2d2520"/><ellipse cx="79.5" cy="21" rx="1.6" ry="1.4" fill="#2d2520"/>
<circle cx="78.2" cy="10.5" r="2.5" fill="#3cc55a"/><circle cx="86" cy="14.5" r="2.3" fill="#55c8e8"/>
</svg>
<div class="a" style="left:510px;top:1046px;width:20px;height:20px;border:2.6px solid #fff;border-radius:50%"></div>
<svg class="a" style="left:569px;top:1044px" width="22" height="21" viewBox="0 0 22 21"><path d="M1.5 0.5 V4 H13.5 V0.5 M1.5 20.5 V17 H13.5 V20.5" stroke="#fff" stroke-width="1.3" fill="none"/><rect x="1.5" y="6.8" width="12" height="7.4" fill="none" stroke="#fff" stroke-width="1.3"/><path d="M19.3 0.5 V20.5" stroke="#fff" stroke-width="1.3"/><rect x="17.8" y="7" width="3" height="3" fill="#fff"/></svg>
<div class="a" style="left:862px;top:1030px;width:56px;height:50px;background:#4a4a4a;"></div>
<div class="a" style="left:924px;top:1030px;width:61px;height:50px;background:#a8602c;"></div>
<div class="a" style="left:921px;top:1032px;width:2px;height:46px;background:#3a3a3a;"></div>
<div class="a" style="left:619.7px;top:1077px;width:50.299999999999955px;height:3px;background:#88dccf;"></div>
<div class="a" style="left:681px;top:1077px;width:50px;height:3px;background:#88dccf;"></div>
<div class="a" style="left:804.7px;top:1077px;width:51.299999999999955px;height:3px;background:#88dccf;"></div>
<div class="a" style="left:862px;top:1077px;width:56px;height:3px;background:#88dccf;"></div>
<div class="a" style="left:924px;top:1077px;width:61px;height:3px;background:#ff7a1a;"></div>
<div class="a" style="left:1052.8px;top:1077px;width:51.200000000000045px;height:3px;background:#88dccf;"></div>
<div class="a" style="left:1176.6px;top:1077px;width:51.100000000000136px;height:3px;background:#88dccf;"></div>
<div class="a" style="left:1238.7px;top:1077px;width:51.299999999999955px;height:3px;background:#88dccf;"></div>
<div class="a" style="left:1300.8px;top:1077px;width:51.700000000000045px;height:3px;background:#88dccf;"></div>
<div class="a" style="left:1363.4px;top:1077px;width:50.299999999999955px;height:3px;background:#88dccf;"></div>
<div class="a" style="left:721px;top:1077px;width:10px;height:3px;background:#6cb5aa;"></div>
<div class="a" style="left:918px;top:1077px;width:4px;height:3px;background:#6cb5aa;"></div>
<div class="a" style="left:1217.6px;top:1077px;width:10.100000000000136px;height:3px;background:#6cb5aa;"></div>
<div class="a" style="left:1279.2px;top:1077px;width:10.799999999999955px;height:3px;background:#6cb5aa;"></div>
<div class="a" style="left:1404px;top:1077px;width:9.700000000000045px;height:3px;background:#6cb5aa;"></div>
<svg class="a" style="left:629px;top:1042px" width="30" height="25" viewBox="0 0 30 25"><path d="M0.5 1.5 H11 L13 3 H27.5 V23.5 H0.5 Z" fill="#e8a81c"/><path d="M0.5 5 H27.5 V23.5 H0.5 Z" fill="#ffd35c"/><path d="M5.5 23.5 V14.5 Q5.5 12.5 7.5 12.5 H20.5 Q22.5 12.5 22.5 14.5 V23.5 H18.5 V16.5 H9.5 V23.5 Z" fill="#3b93db"/></svg>
<svg class="a" style="left:691px;top:1040px" width="32" height="30" viewBox="0 0 32 30"><circle cx="15" cy="15" r="14" fill="#db4437"/><path d="M15 15 L27.1 8 A14 14 0 0 1 15 29 Z" fill="#f4c20d"/><path d="M15 15 L15 29 A14 14 0 0 1 2.9 8 Z" fill="#0f9d58"/><circle cx="15" cy="15" r="6" fill="#fff"/><circle cx="15" cy="15" r="4.8" fill="#4285f4"/><circle cx="24" cy="22" r="7" fill="#5a4a4a"/></svg>
<svg class="a" style="left:754px;top:1040px" width="28" height="28" viewBox="0 0 28 28"><rect x="0" y="0" width="28" height="28" rx="9" fill="#4a8cff"/><rect x="5" y="9" width="12" height="10" rx="2" fill="#fff"/><path d="M18 12 L23 9 V19 L18 16 Z" fill="#fff"/></svg>
<svg class="a" style="left:814px;top:1039px" width="31" height="31" viewBox="0 0 31 31">
<defs><linearGradient id="edg" x1="0" y1="1" x2="1" y2="0"><stop offset="0" stop-color="#0c59a4"/><stop offset="0.45" stop-color="#1b9de2"/><stop offset="1" stop-color="#52d66a"/></linearGradient></defs>
<circle cx="15.5" cy="15.5" r="15" fill="url(#edg)"/>
<path d="M2.5 19 Q4 9.5 15 9 Q26 9 28.5 16.5 Q24 12.5 17 13.5 Q9.5 15 10.5 23 Q11.5 28.5 19 30 Q6 31 2.5 19 Z" fill="#0f63b8"/>
<path d="M14.5 17.2 Q19 15 29.8 17.5 Q29.5 22.5 22.5 22.5 H17 Q14 22 14.5 17.2 Z" fill="#262626"/>
</svg>
<svg class="a" style="left:872px;top:1034px" width="42" height="42" viewBox="0 0 36 36">
<path d="M5 23.3 L23.7 24.8 L23.7 5 L30.2 7 L30.2 27.7 L24 29.7 L5 24.8 Z" fill="#9b6fd6"/>
<path d="M6.3 12 L8 11.5 L11.5 14.5 L17.5 8.7 L20.7 10 L20.7 21 L17.5 22.7 L11.5 17 L8 20 L6.3 19.5 Z M8 13.8 L8 17.8 L10.2 15.8 Z M14 15.8 L17.3 13 L17.3 18.6 Z" fill="#9b6fd6" fill-rule="evenodd"/>
</svg>
<svg class="a" style="left:938px;top:1040px" width="34" height="32" viewBox="0 0 34 32"><circle cx="15" cy="15" r="14.5" fill="#5865f2"/><path d="M8 10 Q11 8 13 8 L14 9.5 H16 L17 8 Q19 8 22 10 Q24 15 24 20 Q22 22 19.5 22.5 L18.5 21 Q16.5 21.7 15 21.7 Q13.5 21.7 11.5 21 L10.5 22.5 Q8 22 6 20 Q6 15 8 10 Z" fill="#fff"/><circle cx="12" cy="16" r="1.6" fill="#5865f2"/><circle cx="18" cy="16" r="1.6" fill="#5865f2"/><circle cx="22.5" cy="22" r="8.2" fill="#e84a4a"/><circle cx="22.5" cy="22" r="3.4" fill="#fff"/></svg>
<svg class="a" style="left:1000px;top:1041px" width="31" height="30" viewBox="0 0 31 30"><rect width="31" height="30" fill="#bf0000"/><text x="3" y="25" font-family="Liberation Sans" font-weight="bold" font-style="italic" font-size="24" fill="#fff">Fz</text></svg>
<svg class="a" style="left:1062px;top:1040px" width="32" height="32" viewBox="0 0 32 32"><ellipse cx="10" cy="5" rx="9" ry="3.5" fill="#ffe070"/><path d="M1 5 V22 Q10 27 19 22 V5 Q10 9 1 5 Z" fill="#e8c040"/><path d="M14 16 L30 31 M30 16 L14 31" stroke="#e0e0e0" stroke-width="2.5"/><path d="M24 3 H30 V9 M3 25 V31 H9" stroke="#4cba5a" stroke-width="1.8" fill="none"/></svg>
<svg class="a" style="left:1124px;top:1040px" width="32" height="32" viewBox="0 0 32 32"><path d="M23 1 L31 5 V27 L23 31 L9 18 L4 22 L1 20 V12 L4 10 L9 14 Z M23 9 L16 16 L23 23 Z" fill="#23a9f2" fill-rule="evenodd"/></svg>
<svg class="a" style="left:1186px;top:1040px" width="31" height="31" viewBox="0 0 31 31"><path d="M10 2 L30 6 L21 29 L1 25 Z" fill="#a8d8e8"/><path d="M10 2 L30 6 L29 9 L9 5 Z" fill="#5a7a8a"/><path d="M8 10 L26 13 M6 15 L24 18 M4 20 L22 23" stroke="#8ab0c0" stroke-width="1"/></svg>
<svg class="a" style="left:1248px;top:1041px" width="31" height="29" viewBox="0 0 31 29"><path d="M9 1.5 Q9 0 10.5 0 H29.5 Q31 0 31 1.5 V27.5 Q31 29 29.5 29 H10.5 Q9 29 9 27.5 Z" fill="#185c37"/><rect x="9" y="0" width="22" height="7.5" fill="#21a366"/><rect x="18" y="0" width="13" height="7.5" fill="#33c481"/><rect x="9" y="7.5" width="22" height="7" fill="#1e8a54"/><rect x="18" y="7.5" width="13" height="7" fill="#21a366"/><rect x="9" y="14.5" width="22" height="7" fill="#107c41"/><rect x="18" y="14.5" width="13" height="7" fill="#1a7d47"/><rect x="0" y="6" width="15" height="15" rx="1.5" fill="#107c41"/><path d="M4.5 9.5 L10.5 17.5 M10.5 9.5 L4.5 17.5" stroke="#fff" stroke-width="2"/></svg>
<svg class="a" style="left:1310px;top:1041px" width="31" height="29" viewBox="0 0 31 29"><path d="M7 1.5 Q7 0 8.5 0 H29.5 Q31 0 31 1.5 V27.5 Q31 29 29.5 29 H8.5 Q7 29 7 27.5 Z" fill="#103f91"/><rect x="7" y="0" width="24" height="7.5" fill="#41a5ee"/><rect x="7" y="7.5" width="24" height="7" fill="#2b7cd3"/><rect x="7" y="14.5" width="24" height="7" fill="#185abd"/><rect x="0" y="6" width="15" height="15" rx="1.5" fill="#185abd"/><path d="M2.8 10 L5 17.5 L7.5 11.5 L10 17.5 L12.2 10" stroke="#fff" stroke-width="1.6" fill="none"/></svg>
<svg class="a" style="left:1374px;top:1041px" width="29" height="29" viewBox="0 0 29 29"><defs><linearGradient id="ph" x1="0" y1="0" x2="0" y2="1"><stop offset="0" stop-color="#2cb0ec"/><stop offset="1" stop-color="#1b78d0"/></linearGradient></defs><rect width="29" height="29" rx="2" fill="url(#ph)"/><path d="M0 29 V18 L8 10.5 L22 23 L29 29 Z" fill="#143f80"/><path d="M14 19 L19 14 L29 21 V29 H22 Z" fill="#4a63cc"/><circle cx="18.5" cy="6.5" r="2.6" fill="#f0f0f0"/></svg>
<svg class="a" style="left:1556px;top:1043px" width="31" height="28" viewBox="0 0 31 28"><circle cx="13" cy="13" r="12.5" fill="#fff"/><circle cx="13" cy="13" r="10.5" fill="#1a8fe0"/><text x="7" y="20" font-family="Liberation Sans" font-weight="bold" font-size="18" fill="#fff">?</text><circle cx="23" cy="20" r="6.5" fill="#f0a020" stroke="#1c1c1c" stroke-width="1"/><path d="M23 18.5 V23.5" stroke="#fff" stroke-width="1.6"/><circle cx="23" cy="16.5" r="0.9" fill="#fff"/></svg>
<svg class="a" style="left:1597px;top:1051px" width="17" height="9"><path d="M1 8.5 L8.5 1 L16 8.5" stroke="#fff" stroke-width="1.4" fill="none"/></svg>
<svg class="a" style="left:1627px;top:1045px" width="17" height="21" viewBox="0 0 17 21"><rect x="1" y="6" width="10" height="9" fill="none" stroke="#fff" stroke-width="1.3"/><path d="M11 9 L16 6.5 V14.5 L11 12" fill="none" stroke="#fff" stroke-width="1.3"/><path d="M2 3 Q8 0 14 3 M2 18 Q8 21 14 18" stroke="#fff" stroke-width="1" fill="none"/></svg>
<svg class="a" style="left:1654px;top:1046px" width="22" height="19" viewBox="0 0 22 19"><path d="M3 13 Q0 13 0 10 Q0 7 3.5 7 Q4 2 9 2 Q13 2 14.5 6 Q19 6 19 10 Q19 13 16 13 Z" fill="#d0d0d0"/><circle cx="15" cy="13" r="5.5" fill="#1a8fe0" stroke="#1c1c1c" stroke-width="1"/><path d="M12.5 12 a2.7 2.7 0 0 1 5 0 M17.5 14 a2.7 2.7 0 0 1 -5 0" stroke="#fff" stroke-width="1" fill="none"/></svg>
<svg class="a" style="left:1684px;top:1048px" width="22" height="15" viewBox="0 0 22 15"><rect x="4" y="3.5" width="15" height="9" fill="none" stroke="#fff" stroke-width="1.3"/><rect x="6" y="5.5" width="11" height="5" fill="#fff"/><rect x="19.5" y="6" width="2" height="4" fill="#fff"/><path d="M0 3 H4 M2 0 V3" stroke="#fff" stroke-width="1.2"/></svg>
<svg class="a" style="left:1714px;top:1046px" width="22" height="19" viewBox="0 0 22 19"><rect x="3" y="2" width="18" height="12" fill="none" stroke="#fff" stroke-width="1.3"/><path d="M12 14 V17 M7 18 H17 M1 0 V6 M0 2 H3" stroke="#fff" stroke-width="1.3"/></svg>
<svg class="a" style="left:1744px;top:1046px" width="22" height="19" viewBox="0 0 22 19"><path d="M1 6.5 H5 L10 2 V17 L5 12.5 H1 Z" fill="none" stroke="#fff" stroke-width="1.3"/><path d="M13 6.5 Q15 9.5 13 12.5 M16 4 Q19.5 9.5 16 15 M19 1.5 Q24 9.5 19 17.5" stroke="#fff" stroke-width="1.2" fill="none"/></svg>
<svg class="a" style="left:1868px;top:1044px" width="31" height="31" viewBox="0 0 31 31"><path d="M1 1 H21 V15 H8 L3 20 V15 H1 Z" fill="#fff"/><path d="M5 5 H17 M5 8.5 H17 M5 12 H13" stroke="#1c1c1c" stroke-width="1.4"/><circle cx="21" cy="20" r="9" fill="#1c1c1c" stroke="#ddd" stroke-width="1.3"/><text x="17.5" y="25" font-family="Liberation Sans" font-weight="bold" font-size="13" fill="#fff">1</text></svg>
<div class="a" style="left:1914px;top:1030px;width:1px;height:50px;background:#3a3a3a;"></div>
<span id="t0" class="t" style="left:55.02px;top:13.83px;font-family:'Liberation Sans';font-size:15.5px;color:#999999;transform-origin:0 0;transform:scaleX(0.9779);">Dungeon_Application - Microsoft Visual Studio</span>
<span id="t1" class="t" style="left:1547.06px;top:8.83px;font-family:'Liberation Sans';font-size:15.5px;color:#999999;transform-origin:0 0;transform:scaleX(0.9412);">Quick Launch (Ctrl+Q)</span>
<span id="t2" class="t" style="left:11.07px;top:43.53px;font-family:'Liberation Sans';font-size:15.5px;color:#f1f1f1;transform-origin:0 0;transform:scaleX(0.9522);">File</span>
<span id="t3" class="t" style="left:58.80px;top:43.53px;font-family:'Liberation Sans';font-size:15.5px;color:#f1f1f1;transform-origin:0 0;transform:scaleX(1.0000);">Edit</span>
<span id="t4" class="t" style="left:110.00px;top:43.53px;font-family:'Liberation Sans';font-size:15.5px;color:#f1f1f1;transform-origin:0 0;transform:scaleX(0.9606);">View</span>
<span id="t5" class="t" style="left:165.63px;top:43.53px;font-family:'Liberation Sans';font-size:15.5px;color:#f1f1f1;transform-origin:0 0;transform:scaleX(0.9521);">Project</span>
<span id="t6" class="t" style="left:234.98px;top:43.53px;font-family:'Liberation Sans';font-size:15.5px;color:#f1f1f1;transform-origin:0 0;transform:scaleX(1.0156);">Build</span>
<span id="t7" class="t" style="left:293.77px;top:43.53px;font-family:'Liberation Sans';font-size:15.5px;color:#f1f1f1;transform-origin:0 0;transform:scaleX(1.0186);">Debug</span>
<span id="t8" class="t" style="left:365.00px;top:43.53px;font-family:'Liberation Sans';font-size:15.5px;color:#f1f1f1;transform-origin:0 0;transform:scaleX(0.9568);">Team</span>
<span id="t9" class="t" style="left:424.80px;top:43.53px;font-family:'Liberation Sans';font-size:15.5px;color:#f1f1f1;transform-origin:0 0;transform:scaleX(1.0000);">Tools</span>
<span id="t10" class="t" style="left:485.62px;top:43.53px;font-family:'Liberation Sans';font-size:15.5px;color:#f1f1f1;transform-origin:0 0;transform:scaleX(0.8929);">Test</span>
<span id="t11" class="t" style="left:534.83px;top:43.53px;font-family:'Liberation Sans';font-size:15.5px;color:#f1f1f1;transform-origin:0 0;transform:scaleX(0.9537);">Analyze</span>
<span id="t12" class="t" style="left:610.60px;top:43.53px;font-family:'Liberation Sans';font-size:15.5px;color:#f1f1f1;transform-origin:0 0;transform:scaleX(1.0036);">Window</span>
<span id="t13" class="t" style="left:690.35px;top:43.53px;font-family:'Liberation Sans';font-size:15.5px;color:#f1f1f1;transform-origin:0 0;transform:scaleX(1.0400);">Help</span>
<span id="t14" class="t" style="left:1772.00px;top:45.58px;font-family:'Liberation Sans';font-size:15.5px;color:#f1f1f1;transform-origin:0 0;transform:scaleX(0.9194);">Jazmine Rizo</span>
<span id="t15" class="t" style="left:1892.00px;top:45.80px;font-family:'Liberation Sans';font-size:12px;color:#c8dcc8;transform-origin:0 0;transform:scaleX(0.9286);">JR</span>
<span id="t16" class="t" style="left:341.97px;top:72.62px;font-family:'Liberation Sans';font-size:15.5px;color:#f1f1f1;transform-origin:0 0;transform:scaleX(1.0233);">Debug</span>
<span id="t17" class="t" style="left:432.44px;top:72.62px;font-family:'Liberation Sans';font-size:15.5px;color:#f1f1f1;transform-origin:0 0;transform:scaleX(0.8698);">Any CPU</span>
<span id="t18" class="t" style="left:598.83px;top:72.62px;font-family:'Liberation Sans';font-size:15.5px;color:#f1f1f1;transform-origin:0 0;transform:scaleX(0.9438);">Start</span>
<span id="t19" class="t" style="left:14.00px;top:105.84px;font-size:15.5px;color:#dcdcdc;writing-mode:vertical-rl;transform-origin:0 0;transform:scaleY(0.9308)">Server Explorer</span>
<span id="t20" class="t" style="left:14.00px;top:221.60px;font-size:15.5px;color:#dcdcdc;writing-mode:vertical-rl;transform-origin:0 0;transform:scaleY(1.0019)">Toolbox</span>
<span id="t21" class="t" style="left:45.54px;top:111.83px;font-family:'Liberation Sans';font-size:15.5px;color:#f1f1f1;transform-origin:0 0;transform:scaleX(0.9459);">Monster.cs</span>
<span id="t22" class="t" style="left:180.00px;top:111.83px;font-family:'Liberation Sans';font-size:15.5px;color:#f1f1f1;transform-origin:0 0;transform:scaleX(0.9440);">WendyWilliams.cs</span>
<span id="t23" class="t" style="left:362.03px;top:111.83px;font-family:'Liberation Sans';font-size:15.5px;color:#f1f1f1;transform-origin:0 0;transform:scaleX(0.9309);">TaylorSwift.cs</span>
<span id="t24" class="t" style="left:513.19px;top:111.83px;font-family:'Liberation Sans';font-size:15.5px;color:#f1f1f1;transform-origin:0 0;transform:scaleX(0.8704);">Race.cs</span>
<span id="t25" class="t" style="left:625.48px;top:111.83px;font-family:'Liberation Sans';font-size:15.5px;color:#f1f1f1;transform-origin:0 0;transform:scaleX(0.8968);">Player.cs</span>
<span id="t26" class="t" style="left:745.06px;top:111.83px;font-family:'Liberation Sans';font-size:15.5px;color:#f1f1f1;transform-origin:0 0;transform:scaleX(0.9359);">Program.cs</span>
<span id="t27" class="t" style="left:882.56px;top:111.83px;font-family:'Liberation Sans';font-size:15.5px;color:#f1f1f1;transform-origin:0 0;transform:scaleX(0.9552);">HilaryClinton.cs</span>
<span id="t28" class="t" style="left:1048.85px;top:111.83px;font-family:'Liberation Sans';font-size:15.5px;color:#f1f1f1;transform-origin:0 0;transform:scaleX(0.9250);">Weapon.cs</span>
<span id="t29" class="t" style="left:1183.05px;top:111.83px;font-family:'Liberation Sans';font-size:15.5px;color:#f1f1f1;transform-origin:0 0;transform:scaleX(0.9452);">Combat.cs</span>
<span id="t30" class="t" style="left:1316.24px;top:111.83px;font-family:'Liberation Sans';font-size:15.5px;color:#ffffff;transform-origin:0 0;transform:scaleX(0.9116);">Character.cs</span>
<span id="t31" class="t" style="left:66.05px;top:139.32px;font-family:'Liberation Sans';font-size:15.5px;color:#f1f1f1;transform-origin:0 0;transform:scaleX(0.9679);">DungeonLibrary</span>
<span id="t32" class="t" style="left:650.07px;top:139.32px;font-family:'Liberation Sans';font-size:15.5px;color:#f1f1f1;transform-origin:0 0;transform:scaleX(0.9528);">DungeonLibrary.Character</span>
<span id="t33" class="t" style="left:1236.14px;top:139.32px;font-family:'Liberation Sans';font-size:15.5px;color:#999999;transform-origin:0 0;transform:scaleX(0.8931);">_life</span>
<span id="t34" class="t" style="left:44.05px;top:816.12px;font-family:'Liberation Sans';font-size:15.5px;color:#f1f1f1;transform-origin:0 0;transform:scaleX(0.9524);">110 %</span>
<span id="t35" class="t" style="left:44.01px;top:850.12px;font-family:'Liberation Sans';font-size:15.5px;color:#f1f1f1;transform-origin:0 0;transform:scaleX(0.9935);">Output</span>
<span id="t36" class="t" style="left:49.01px;top:880.12px;font-family:'Liberation Sans';font-size:15.5px;color:#f1f1f1;transform-origin:0 0;transform:scaleX(0.9944);">Show output from:</span>
<span id="t37" class="t" style="left:185.04px;top:878.83px;font-family:'Liberation Sans';font-size:15.5px;color:#f1f1f1;transform-origin:0 0;transform:scaleX(0.9610);">Source Control - Git</span>
<span id="t38" class="t" style="left:44.50px;top:929.12px;font-family:'Liberation Sans';font-size:15.5px;color:#f1f1f1;transform-origin:0 0;transform:scaleX(0.9194);">Error List</span>
<span id="t39" class="t" style="left:54.44px;top:958.53px;font-family:'Liberation Sans';font-size:15.5px;color:#f1f1f1;transform-origin:0 0;transform:scaleX(0.9697);">Entire Solution</span>
<span id="t40" class="t" style="left:281.00px;top:958.53px;font-family:'Liberation Sans';font-size:15.5px;color:#f1f1f1;transform-origin:0 0;transform:scaleX(0.9091);">0 Errors</span>
<span id="t41" class="t" style="left:379.00px;top:958.53px;font-family:'Liberation Sans';font-size:15.5px;color:#f1f1f1;transform-origin:0 0;transform:scaleX(0.9519);">0 Warnings</span>
<span id="t42" class="t" style="left:500.00px;top:958.53px;font-family:'Liberation Sans';font-size:15.5px;color:#f1f1f1;transform-origin:0 0;transform:scaleX(0.9157);">0 Messages</span>
<span id="t43" class="t" style="left:640.44px;top:958.53px;font-family:'Liberation Sans';font-size:15.5px;color:#f1f1f1;transform-origin:0 0;transform:scaleX(0.9692);">Build + IntelliSense</span>
<span id="t44" class="t" style="left:1544.08px;top:958.53px;font-family:'Liberation Sans';font-size:15.5px;color:#999999;transform-origin:0 0;transform:scaleX(0.9217);">Search Error List</span>
<span id="t45" class="t" style="left:1852.54px;top:204.85px;font-family:'Liberation Sans';font-size:17px;color:#ffffff;transform-origin:0 0;transform:scaleX(1.0875);font-weight:bold">Gi</span>
<span id="t46" class="t" style="left:1889.40px;top:105.38px;font-size:15.5px;color:#dcdcdc;writing-mode:vertical-rl;transform-origin:0 0;transform:scaleY(1.0120)">Notifications</span>
<span id="t47" class="t" style="left:1889.40px;top:206.00px;font-size:15.5px;color:#dcdcdc;writing-mode:vertical-rl;transform-origin:0 0;transform:scaleY(0.9500)">Team Explorer</span>
<span id="t48" class="t" style="left:1889.40px;top:315.03px;font-size:15.5px;color:#dcdcdc;writing-mode:vertical-rl;transform-origin:0 0;transform:scaleY(0.9744)">Solution Explorer</span>
<span id="t49" class="t" style="left:34.07px;top:1007.83px;font-family:'Liberation Sans';font-size:15.5px;color:#ffffff;transform-origin:0 0;transform:scaleX(0.9318);">Ready</span>
<span id="t50" class="t" style="left:756.67px;top:1007.83px;font-family:'Liberation Sans';font-size:15.5px;color:#ffffff;transform-origin:0 0;transform:scaleX(0.9053);">Ln 10</span>
<span id="t51" class="t" style="left:870.03px;top:1007.83px;font-family:'Liberation Sans';font-size:15.5px;color:#ffffff;transform-origin:0 0;transform:scaleX(0.9714);">Col 6</span>
<span id="t52" class="t" style="left:984.07px;top:1007.83px;font-family:'Liberation Sans';font-size:15.5px;color:#ffffff;transform-origin:0 0;transform:scaleX(0.9290);">Ch 6</span>
<span id="t53" class="t" style="left:1154.05px;top:1007.83px;font-family:'Liberation Sans';font-size:15.5px;color:#ffffff;transform-origin:0 0;transform:scaleX(0.9542);">INS</span>
<span id="t54" class="t" style="left:1239.80px;top:1007.83px;font-family:'Liberation Sans';font-size:15.5px;color:#ffffff;transform-origin:0 0;transform:scaleX(0.9891);">jazminerizo / Dungeon_Application</span>
<span id="t55" class="t" style="left:1519.59px;top:1007.83px;font-family:'Liberation Sans';font-size:15.5px;color:#ffffff;transform-origin:0 0;transform:scaleX(1.0250);">0</span>
<span id="t56" class="t" style="left:1582.11px;top:1007.83px;font-family:'Liberation Sans';font-size:15.5px;color:#ffffff;transform-origin:0 0;transform:scaleX(0.7875);">1</span>
<span id="t57" class="t" style="left:1643.61px;top:1007.83px;font-family:'Liberation Sans';font-size:15.5px;color:#ffffff;transform-origin:0 0;transform:scaleX(0.9842);">Dungeon_Application</span>
<span id="t58" class="t" style="left:1841.58px;top:1007.83px;font-family:'Liberation Sans';font-size:15.5px;color:#ffffff;transform-origin:0 0;transform:scaleX(1.0219);">main</span>
<span id="t59" class="t" style="left:110.41px;top:1045.55px;font-family:'Liberation Sans';font-size:19px;color:#d6d6d6;transform-origin:0 0;transform:scaleX(0.9737);">Type here to search</span>
<span id="t60" class="t" style="left:1786.00px;top:1035.58px;font-family:'Liberation Sans';font-size:15.5px;color:#ffffff;transform-origin:0 0;transform:scaleX(0.9018);">4:00 PM</span>
<span id="t61" class="t" style="left:1777.40px;top:1058.62px;font-family:'Liberation Sans';font-size:15.5px;color:#ffffff;transform-origin:0 0;transform:scaleX(0.9985);">5/18/2022</span>
</body></html>
